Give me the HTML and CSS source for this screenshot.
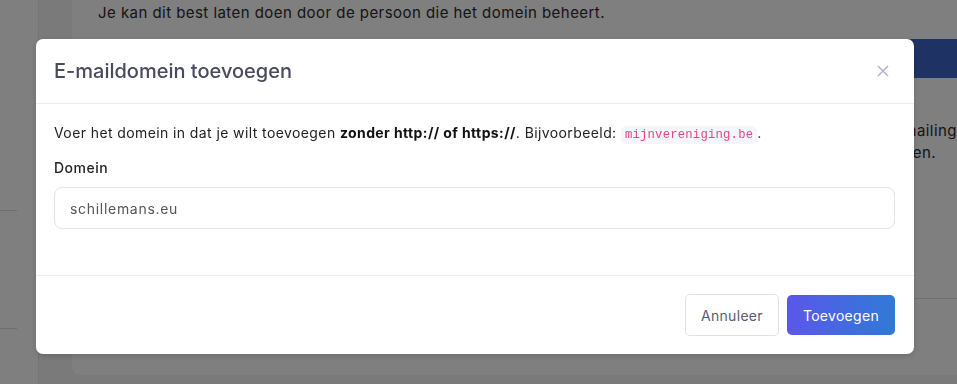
FILE: index.html
```html
<!DOCTYPE html>
<html lang="nl">
<head>
  <meta charset="UTF-8" />
  <meta name="viewport" content="width=device-width, initial-scale=1.0"/>
  <title>E-maildomein toevoegen</title>
  <link rel="stylesheet" href="styles.css">
</head>
<body>
  <div class="app">
    <aside class="sidebar">
      <div class="side-line first"></div>
      <div class="side-line second"></div>
    </aside>
    <main class="main">
      <section class="card">
        <p class="card-title">Hoe stel je een e-maildomein in?</p>
        <p class="card-text">Je kan dit best laten doen door de persoon die het domein beheert.</p>
        <div class="banner"></div>
        <p class="card-text right">Stuur e-mails vanaf je eigen domein voor elke mailing</p>
        <p class="card-text right second">zodat ze minder vaak in de spam terechtkomen.</p>
        <div class="card-row"></div>
      </section>
    </main>
  </div>

  <div class="backdrop"></div>

  <div class="modal">
    <div class="modal-header">
      <h1>E-maildomein toevoegen</h1>
      <button class="close-btn" aria-label="Sluiten">
        <svg width="12" height="12" viewBox="0 0 12 12"><path d="M1 1 L11 11 M11 1 L1 11" stroke="#b3b4c3" stroke-width="1.5" fill="none"/></svg>
      </button>
    </div>
    <div class="modal-body">
      <p>Voer het domein in dat je wilt toevoegen <strong>zonder http:// of https://</strong>. Bijvoorbeeld: <code>mijnvereniging.be</code>.</p>
      <label for="domein">Domein</label>
      <input id="domein" type="text" value="schillemans.eu">
    </div>
    <div class="modal-footer">
      <button class="btn btn-light">Annuleer</button>
      <button class="btn btn-primary">Toevoegen</button>
    </div>
  </div>
</body>
</html>
```

FILE: styles.css
```css
html, body {
  margin: 0;
  height: 384px;
  overflow: hidden;
  font-family: 'Inter', 'Open Sans', sans-serif;
  color: #2a2a2a;
  background: #f4f4f5;
}
.app {
  display: flex;
  height: 384px;
}
.sidebar {
  width: 38px;
  border-right: 1px solid #ebebef;
  background: #fff;
}
.side-line {
  width: 17px;
  height: 1px;
  background: #dcdce2;
  margin-top: 210px;
}
.side-line.second {
  margin-top: 117px;
}
.main {
  flex: 1;
  padding-left: 33px;
  overflow: hidden;
}
.card {
  box-sizing: border-box;
  height: 415px;
  margin-top: -40px;
  padding-top: 20px;
  background: #fff;
  border-radius: 0 0 0 8px;
}
.card p {
  margin: 0;
  font-size: 15px;
  line-height: 22px;
  letter-spacing: 0.45px;
  padding-left: 26px;
  white-space: nowrap;
}
.card-title {
  font-weight: 700;
}
.banner {
  height: 39px;
  margin-top: 15px;
  background: #3c64c8;
}
.card-text.right {
  text-align: right;
  margin-top: 42px;
}
.card-text.right.second {
  margin-top: 0;
  padding-right: 21px;
}
.card-row {
  margin-top: 134px;
  border-top: 1px solid #dedee4;
}

/* modal */
.backdrop {
  position: fixed;
  top: 0; left: 0; right: 0; bottom: 0;
  background: rgba(0, 0, 0, 0.5);
}
.modal {
  position: fixed;
  top: 39px;
  left: 36px;
  width: 878px;
  background: #fff;
  border-radius: 7px;
  box-shadow: 0 2px 6px rgba(0, 0, 0, 0.15);
  color: #222;
}
.modal-header {
  height: 64px;
  display: flex;
  align-items: center;
  justify-content: space-between;
  padding: 0 25px 0 18px;
  border-bottom: 1px solid #ebecf0;
}
.modal-header h1 {
  margin: 0;
  font-size: 20px;
  font-weight: 500;
  color: #4a4a5e;
}
.close-btn {
  border: none;
  background: none;
  padding: 0;
  width: 12px;
  height: 12px;
  display: flex;
  cursor: pointer;
}
.modal-body {
  padding: 18px 19px 46px 18px;
}
.modal-body p {
  margin: 0;
  font-size: 14px;
  line-height: 21px;
  letter-spacing: 0.4px;
}
.modal-body strong {
  color: #111;
  font-weight: 700;
}
code {
  font-family: 'Liberation Mono', 'DejaVu Sans Mono', monospace;
  font-size: 12.25px;
  letter-spacing: 0.2px;
  color: #e0478b;
  background: #f5f6f9;
  padding: 2px 4px;
  border-radius: 5px;
}
label {
  display: block;
  margin-top: 11px;
  margin-bottom: 9px;
  font-size: 14px;
  line-height: 21px;
  font-weight: 500;
  letter-spacing: 0.5px;
}
input {
  box-sizing: border-box;
  width: 100%;
  height: 42px;
  padding: 0 15px;
  border: 1px solid #e1e3ee;
  border-radius: 8px;
  font-family: inherit;
  font-size: 14px;
  letter-spacing: 0.7px;
  color: #555;
  outline: none;
}
.modal-footer {
  display: flex;
  justify-content: flex-end;
  gap: 8px;
  padding: 18px 19px 18px 18px;
  border-top: 1px solid #ebecf0;
}
.btn {
  height: 42px;
  padding: 0 15px;
  border-radius: 5px;
  font-family: inherit;
  font-size: 14px;
  letter-spacing: 0.3px;
  cursor: pointer;
}
.btn-light {
  background: #fff;
  border: 1px solid #dfe1ea;
  color: #5b5b6e;
}
.btn-primary {
  height: 40px;
  margin-top: 1px;
  padding: 0 16px;
  border: none;
  color: #fff;
  background: linear-gradient(90deg, #5b57ea, #2f7ad6);
}
```
